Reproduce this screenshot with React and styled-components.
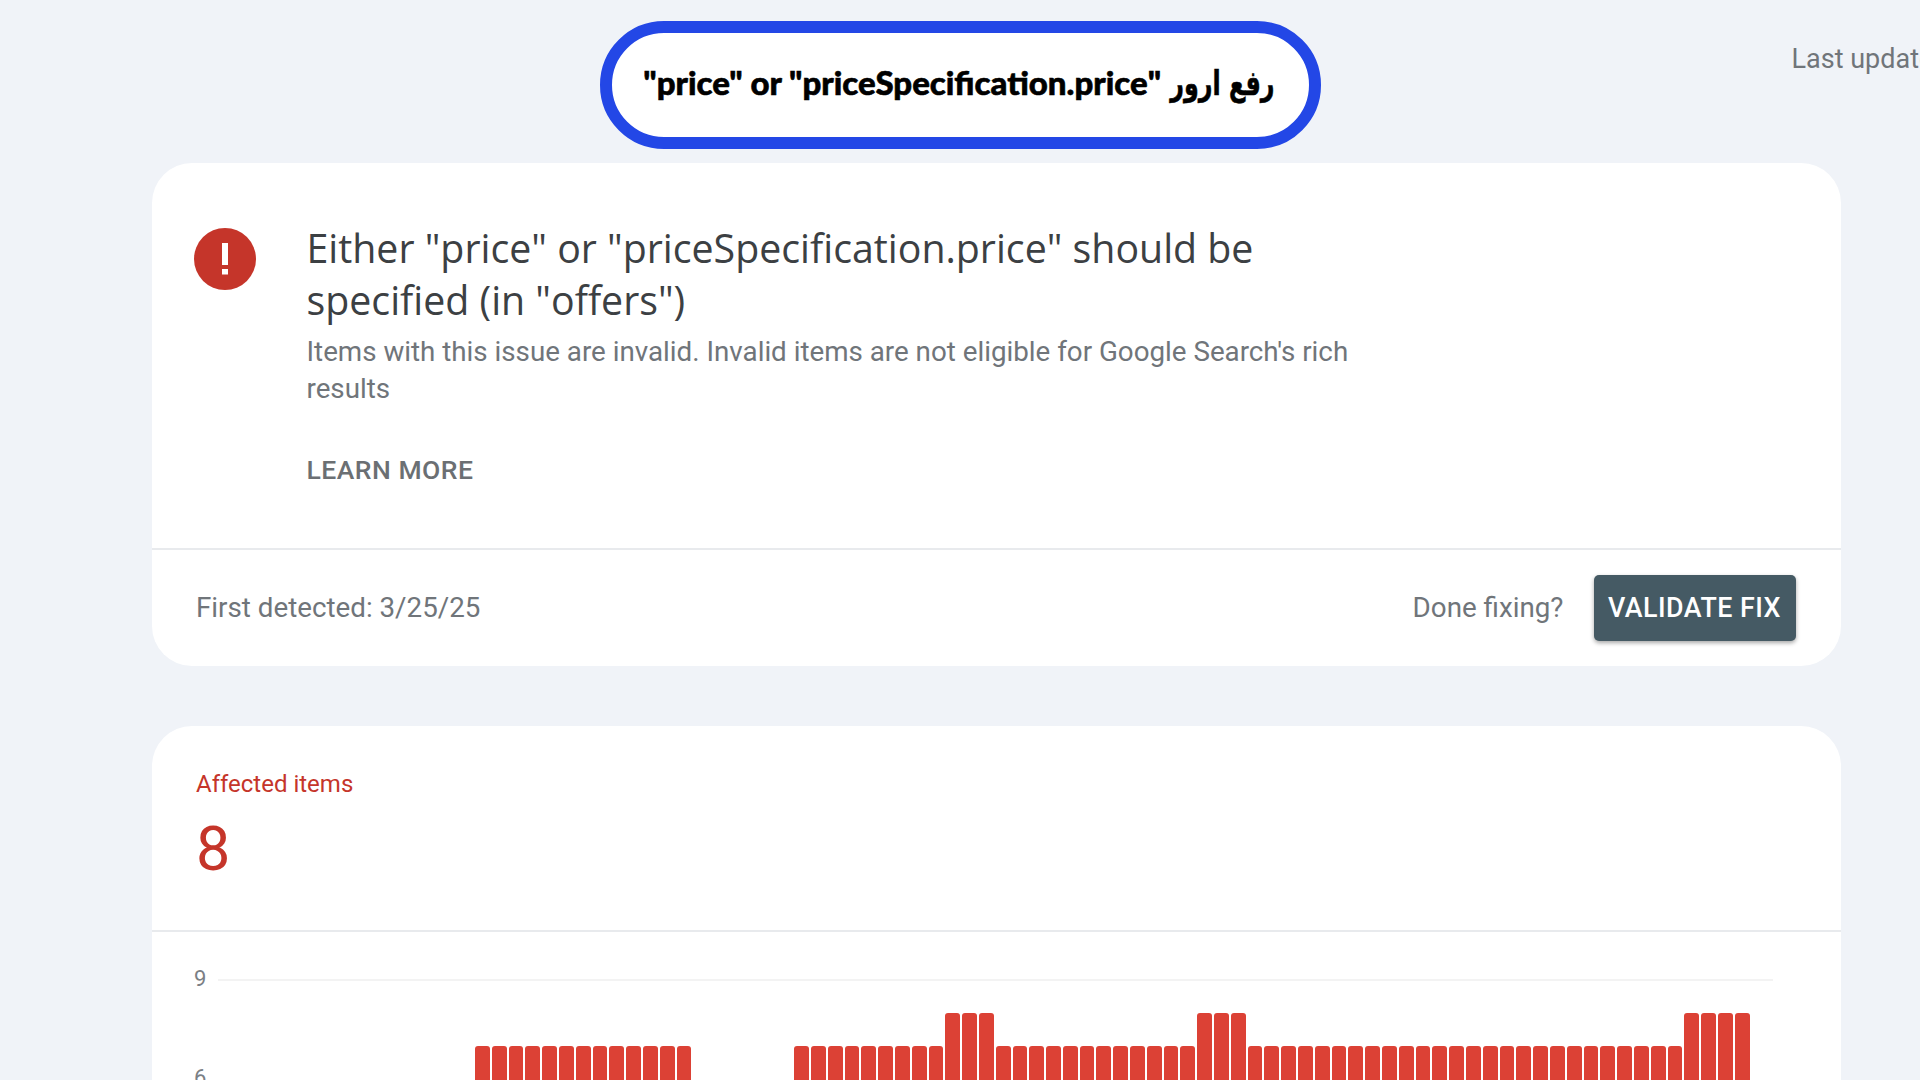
import styled, { createGlobalStyle } from "styled-components";

const repeat = (value, count) => Array(count).fill(value);

const barValues = [
  ...repeat(7, 13),
  ...repeat(0, 6),
  ...repeat(7, 9),
  ...repeat(8, 3),
  ...repeat(7, 12),
  ...repeat(8, 3),
  ...repeat(7, 26),
  ...repeat(8, 4),
];

export default function App() {
  return (
    <Page>
      <GlobalStyle />
      <TopBar>
        <span />
        <TitlePill>
          <PillText dir="rtl">
            <ArabicWord>رفع ارور</ArabicWord> "price" or "priceSpecification.price"
          </PillText>
        </TitlePill>
        <LastUpdated>Last updated</LastUpdated>
      </TopBar>

      <Card>
        <IssueBody>
          <ErrorIcon viewBox="0 0 62 62">
            <circle cx="31" cy="31" r="31" fill="#c5352a" />
            <rect x="28" y="15" width="6" height="22" fill="#fff" />
            <rect x="28" y="41" width="6" height="5.5" fill="#fff" />
          </ErrorIcon>
          <IssueText>
            <IssueTitle>
              Either "price" or "priceSpecification.price" should be specified (in "offers")
            </IssueTitle>
            <IssueDescription>
              Items with this issue are invalid. Invalid items are not eligible for Google Search's rich results
            </IssueDescription>
            <LearnMore>LEARN MORE</LearnMore>
          </IssueText>
        </IssueBody>
        <CardFooter>
          <FooterText>First detected: 3/25/25</FooterText>
          <FooterActions>
            <FooterText>Done fixing?</FooterText>
            <ValidateButton>VALIDATE FIX</ValidateButton>
          </FooterActions>
        </CardFooter>
      </Card>

      <Card>
        <Summary>
          <SummaryLabel>Affected items</SummaryLabel>
          <SummaryValue>8</SummaryValue>
        </Summary>
        <Chart>
          <Axis>
            <Tick>9</Tick>
            <Tick>6</Tick>
          </Axis>
          <Plot>
            {barValues.map((value, i) => (
              <Bar key={i} $value={value} />
            ))}
          </Plot>
        </Chart>
      </Card>
    </Page>
  );
}

const GlobalStyle = createGlobalStyle`
  html, body {
    margin: 0;
    padding: 0;
    background: #f0f3f8;
  }
`;

const Page = styled.div`
  width: 1920px;
  height: 1080px;
  overflow: hidden;
  box-sizing: border-box;
  padding: 21px 79.5px 0 152px;
  display: flex;
  flex-direction: column;
  gap: 59.5px;
  background: #f0f3f8;
  font-family: Roboto, "Liberation Sans", sans-serif;
`;

const TopBar = styled.header`
  display: grid;
  grid-template-columns: 447.5px 721px 1fr;
  margin-bottom: -45.5px;
`;

const TitlePill = styled.div`
  box-sizing: border-box;
  height: 128px;
  padding-bottom: 5px;
  border: 12px solid #2347e6;
  border-radius: 64px;
  background: #fff;
  display: flex;
  align-items: center;
  justify-content: center;
`;

const PillText = styled.span`
  font-family: Lato, "DejaVu Sans", sans-serif;
  font-size: 33px;
  font-weight: 900;
  color: #000;
  white-space: nowrap;
  -webkit-text-stroke: 0.6px #000;
`;

const ArabicWord = styled.span`
  display: inline-block;
  margin: 0 -20.5px;
  font-family: "DejaVu Sans", sans-serif;
  font-size: 34px;
  transform: scaleX(0.7);
`;

const LastUpdated = styled.div`
  margin: 20px 0 0 471px;
  font-size: 27px;
  line-height: 36px;
  color: #70757a;
  white-space: nowrap;
`;

const Card = styled.section`
  background: #fff;
  border-radius: 40px;
  overflow: hidden;
  flex-shrink: 0;
`;

const IssueBody = styled.div`
  display: flex;
  align-items: flex-start;
  gap: 50.5px;
  height: 387px;
  box-sizing: border-box;
  padding: 59px 0 0 42px;
  border-bottom: 2px solid #e8eaed;
`;

const ErrorIcon = styled.svg`
  width: 62px;
  height: 62px;
  margin-top: 6px;
  flex-shrink: 0;
`;

const IssueText = styled.div`
  width: 1060px;
`;

const IssueTitle = styled.h1`
  margin: 0 0 7px;
  font-family: "Open Sans", Roboto, sans-serif;
  font-size: 39.3px;
  font-weight: 400;
  line-height: 52px;
  color: #3c4043;
`;

const IssueDescription = styled.p`
  margin: 0;
  font-size: 27.75px;
  line-height: 37px;
  color: #70757a;
`;

const LearnMore = styled.a`
  display: block;
  margin-top: 45px;
  font-size: 26.5px;
  font-weight: 500;
  line-height: 36px;
  letter-spacing: 0.5px;
  color: #6b6f73;
`;

const CardFooter = styled.div`
  height: 116px;
  box-sizing: border-box;
  padding: 0 45px 0 44px;
  display: flex;
  align-items: center;
  justify-content: space-between;
`;

const FooterText = styled.span`
  padding-bottom: 2px;
  font-size: 27.75px;
  color: #70757a;
`;

const FooterActions = styled.div`
  display: flex;
  align-items: center;
  gap: 30px;
`;

const ValidateButton = styled.button`
  width: 202px;
  height: 66px;
  padding: 0;
  border: 0;
  border-radius: 5px;
  background: #455a64;
  box-shadow: 0 2px 4px rgba(0, 0, 0, 0.35);
  color: #fff;
  font-family: inherit;
  font-size: 26.8px;
  font-weight: 500;
  letter-spacing: 0.5px;
`;

const Summary = styled.div`
  height: 206px;
  box-sizing: border-box;
  padding: 43px 44px 0;
  border-bottom: 2px solid #e8eaed;
`;

const SummaryLabel = styled.div`
  font-size: 24px;
  line-height: 30px;
  color: #c5352a;
`;

const SummaryValue = styled.div`
  margin-top: 16px;
  font-size: 61px;
  line-height: 68px;
  color: #c5352a;
`;

const Chart = styled.div`
  display: flex;
  padding: 47px 67.5px 0 42px;
`;

const Axis = styled.div`
  width: 24px;
  flex-shrink: 0;
`;

const Tick = styled.div`
  height: 99px;
  line-height: 0;
  font-size: 22px;
  color: #7b8085;
`;

const Plot = styled.div`
  flex: 1;
  height: 298px;
  box-sizing: border-box;
  padding-left: 257px;
  border-top: 2px solid #f3f3f3;
  display: flex;
  align-items: flex-end;
  gap: 2px;
`;

const Bar = styled.div`
  width: 14.8px;
  flex-shrink: 0;
  height: ${(props) => props.$value * 33}px;
  border-radius: 3px 3px 0 0;
  background: ${(props) => (props.$value ? "#dc4135" : "transparent")};
`;
